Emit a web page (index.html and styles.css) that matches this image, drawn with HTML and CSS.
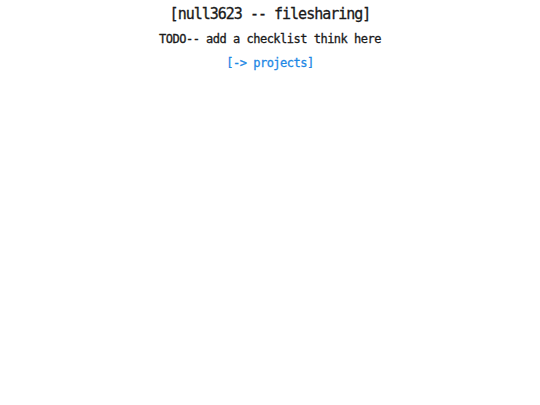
FILE: index.html
```html
<!DOCTYPE html>
<html>
<head>
<meta charset="utf-8">
<link rel="stylesheet" href="styles.css">
</head>
<body>
<main class="page">
<h1 class="title">[null3623 -- filesharing]</h1>
<p class="note">TODO-- add a checklist think here</p>
<a class="link" href="#">[-&gt; projects]</a>
</main>
</body>
</html>
```
FILE: styles.css
```css
html, body { margin: 0; padding: 0; background: #fff; }
.page {
  display: flex;
  flex-direction: column;
  align-items: center;
  font-family: "DejaVu Sans Mono", monospace;
  color: #1a1a1a;
  padding-top: 4px;
  -webkit-text-stroke: 0.3px currentColor;
}
.title {
  margin: 0;
  font-size: 15px;
  letter-spacing: -1px;
  font-weight: normal;
  line-height: 20px;
}
.note {
  margin: 7px 0 0 0;
  font-size: 12px;
  letter-spacing: -0.5px;
  line-height: 16px;
}
.link {
  margin-top: 8px;
  font-size: 12px;
  letter-spacing: -0.5px;
  line-height: 16px;
  color: #1e88e5;
  text-decoration: none;
}
```
